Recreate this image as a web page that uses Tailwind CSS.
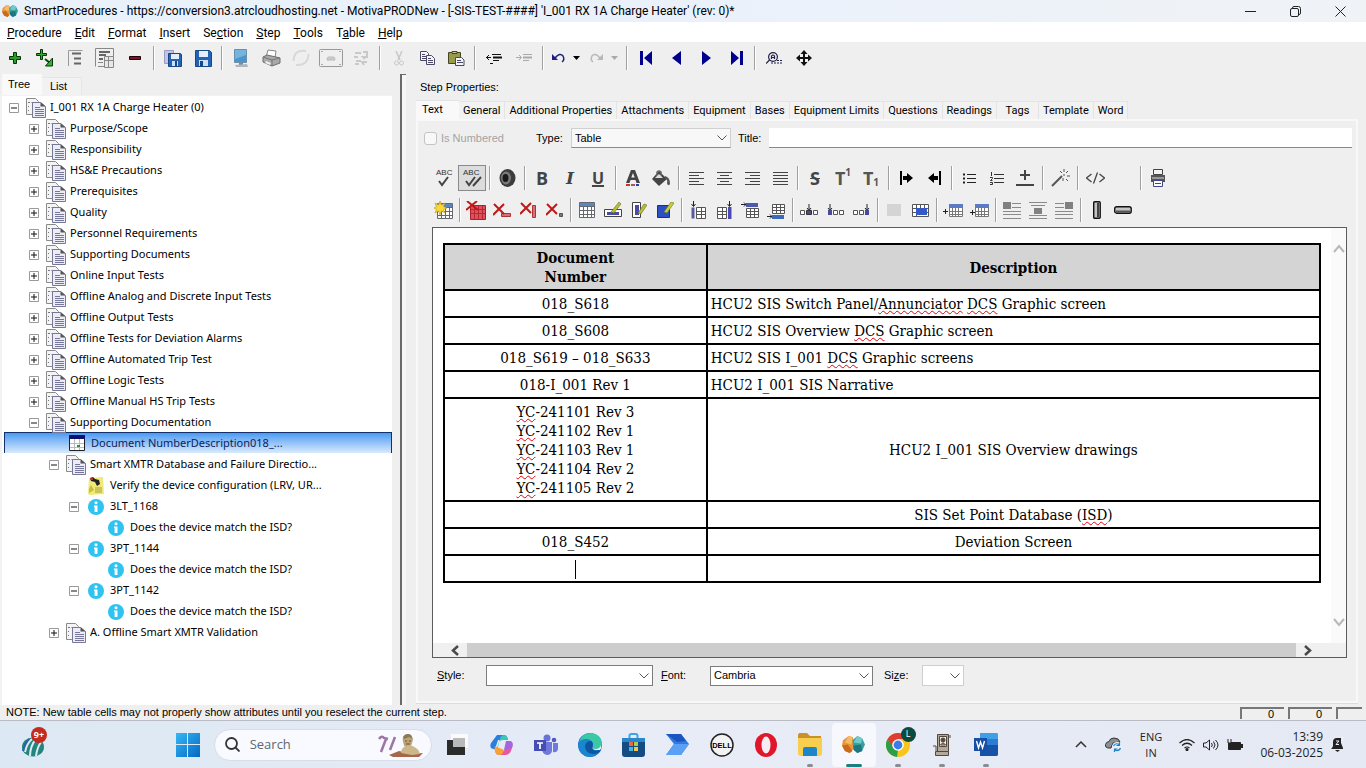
<!DOCTYPE html>
<html lang="en">
<head>
<meta charset="utf-8">
<title>SmartProcedures</title>
<script src="https://cdn.jsdelivr.net/npm/@tailwindcss/browser@4"></script>
</head>
<body class="flex h-screen flex-col overflow-hidden bg-[#efefef] font-['Liberation_Sans',sans-serif] text-[11px] text-black">

<svg class="hidden">
  <symbol id="plus" viewBox="0 0 10 10"><path d="M.5.5h9v9h-9z" fill="#fff" stroke="#9a9a9a"/><path d="M2 5h6M5 2v6" stroke="#111"/></symbol>
  <symbol id="minus" viewBox="0 0 10 10"><path d="M.5.5h9v9h-9z" fill="#fff" stroke="#9a9a9a"/><path d="M2 5h6" stroke="#111"/></symbol>
  <symbol id="docs" viewBox="0 0 20 20"><path d="M.5.5h9l3 3v13H.5z" fill="#f4f4f4" stroke="#8a8a8a"/><path d="M2 4.500h2M5.500 4.500h2M2 8.500h1M2 12.500h1" stroke="#777"/><path d="M6.500 4.500h8l5 4v11h-13z" fill="#ececf6" stroke="#777797"/><path d="M14.500 4v4.500h5z" fill="#555"/><path d="M9 9.500h5M9 11.500h9M9 13.500h9M9 15.500h9M9 17.500h9" stroke="#77779a"/></symbol>
  <symbol id="info" viewBox="0 0 16 16"><circle cx="8" cy="8" r="8" fill="#2fc3f2"/><circle cx="8" cy="3.800" r="1.500" fill="#fff"/><path d="M6 6.500h3.500V13H6.600V8H6z" fill="#fff"/></symbol>
  <symbol id="knot" viewBox="0 0 24 16"><path d="M7 0 11 1 13 5 12 12 8 16 3 14 0 9 1 4z" fill="#e8963a"/><path d="M7 0 11 1 10 8 3 6z" fill="#f7bb66"/><path d="M0 9 6 8 11 14 8 16 3 14z" fill="#c96a1c"/><path d="M16 0 21 2 24 8 21 14 16 16 12 13 11 4z" fill="#3a9fa0"/><path d="M16 0 21 2 20 7 12 6z" fill="#72cbc7"/><path d="M12 9 20 8 21 14 16 16 12 13z" fill="#1d777f"/></symbol>
  <symbol id="grid" viewBox="0 0 16 16"><path d="M.5.5h15v15H.5z" fill="#fff" stroke="#66686f"/><path d="M1 1h14v3H1z" fill="#5b86c4"/><path d="M1 4.500h14M1 8.500h14M1 12.500h14M4.500 4v11M8.500 4v11M12.500 4v11" stroke="#66686f"/></symbol>
  <symbol id="chev" viewBox="0 0 10 6"><path d="m.5.5 4.500 4.500L9.500.5" fill="none" stroke="#555"/></symbol>
</svg>

<header class="flex h-[22px] shrink-0 items-center bg-gradient-to-r from-[#e9f1fb] via-[#eaf1fb] to-[#f0f3f6] pr-[3px] font-['Roboto',sans-serif] text-[12px]">
  <svg class="ml-0.5 h-3 w-4" viewBox="0 0 24 16" preserveAspectRatio="none"><use href="#knot"/></svg>
  <h1 class="ml-1.5 flex-1 whitespace-nowrap">SmartProcedures - https://conversion3.atrcloudhosting.net - MotivaPRODNew - [-SIS-TEST-####] 'I_001 RX 1A Charge Heater' (rev: 0)*</h1>
  <div class="flex [&>button]:flex [&>button]:h-5 [&>button]:w-[45px] [&>button]:items-center [&>button]:justify-center">
    <button aria-label="Minimize"><svg width="11" height="11"><path d="M0 5.500h11" stroke="#222"/></svg></button>
    <button aria-label="Restore"><svg width="11" height="11" fill="none" stroke="#222"><rect x=".5" y="2.500" width="8" height="8" rx="1.500"/><path d="M2.500 2.500V2Q2.500.5 4 .5h4.500Q10.500.5 10.500 2.500V7Q10.500 8.500 9 8.500"/></svg></button>
    <button aria-label="Close"><svg width="11" height="11"><path d="m.5.5 10 10m0-10-10 10" stroke="#222"/></svg></button>
  </div>
</header>

<nav class="flex h-5 shrink-0 items-center gap-[13px] bg-white pl-[7px] pt-px font-['Roboto',sans-serif] text-[12px]">
  <button><u>P</u>rocedure</button><button><u>E</u>dit</button><button><u>F</u>ormat</button><button><u>I</u>nsert</button><button>Se<u>c</u>tion</button><button><u>S</u>tep</button><button><u>T</u>ools</button><button>T<u>a</u>ble</button><button><u>H</u>elp</button>
</nav>

<div role="toolbar" aria-label="Procedure" class="flex h-8 shrink-0 items-center [&>button]:flex [&>button]:h-7 [&>button]:w-[30px] [&>button]:items-center [&>button]:justify-center [&>hr]:mx-[3px] [&>hr]:h-6 [&>hr]:w-0.5 [&>hr]:border-0 [&>hr]:border-l [&>hr]:border-[#a0a0a0] [&>hr]:bg-white">
  <button aria-label="Add"><svg width="12" height="12"><path d="M4.500.5h3v4h4v3h-4v4h-3v-4h-4v-3h4z" fill="#2c9a2c" stroke="#033803"/></svg></button>
  <button aria-label="Add child"><svg width="18" height="18"><path d="M4.500.5h2v4h4v2h-4v4h-2v-4h-4v-2h4z" fill="#35b035" stroke="#033803"/><path d="m9 10 5 4" stroke="#044b04" stroke-width="2"/><path d="M16.500 9v8h-7z" fill="#35b035" stroke="#033803"/></svg></button>
  <button aria-label="Step"><svg width="15" height="16" fill="none" stroke="#999"><path d="M.5 16V.5h14"/><path d="M4 3.500h9M6 8.500h7M6 13.500h7" stroke="#666" stroke-width="2"/></svg></button>
  <button aria-label="Template step"><svg width="20" height="20" fill="none" stroke="#888"><path d="M.5.5h18v14M.5.5v18M3 14.500h5M3 18.500h6"/><path d="M4 4h11M4 7h7M4 11h4" stroke="#666" stroke-width="2"/><path d="M9.500 8.500h9v11h-9zM13.500 9v10M9 12.500h9" fill="#e8e8e8"/></svg></button>
  <button aria-label="Remove"><svg width="12" height="4"><path d="M.5.5h11v3H.5z" fill="#7b1230" stroke="#22000a"/></svg></button>
  <hr>
  <button aria-label="Save all"><svg width="18" height="17"><path d="M.5.5h9v13h-9z" fill="#c4c4e8" stroke="#9a9ac4"/><path d="M4.500 3.500h12l1 1v12h-13z" fill="#2463b4" stroke="#174785"/><path d="M7 4h8v5H7z" fill="#e4eefb"/><path d="M8 11h6v5H8z" fill="#cfe0f5"/><path d="M11 11h2v5h-2z" fill="#174785"/></svg></button>
  <button aria-label="Save"><svg width="17" height="17"><path d="M.5.5h14l2 2v14H.5z" fill="#2463b4" stroke="#174785"/><path d="M4 1h9v6H4z" fill="#e4eefb"/><path d="M4 10h9v6H4z" fill="#cfe0f5"/><path d="M5 11h3v5H5z" fill="#174785"/></svg></button>
  <hr>
  <button aria-label="View on screen"><svg width="16" height="19"><path d="M1.500.5h12v13h-12z" fill="#4d94cc" stroke="#6a90ad"/><path d="M2 1h11v5L2 10z" fill="#75b4df"/><path d="M6 14h4v2H6z" fill="#888"/><path d="m2 16 12-1 1 3H3z" fill="#aab6c2"/></svg></button>
  <button aria-label="Print"><svg width="19" height="18"><path d="m6 1 8 1-1 7-9-1z" fill="#fff" stroke="#888"/><path d="m1 8 4-2 9 2 4 1v5l-8 3-9-4z" fill="#a9a9a9" stroke="#6e6e6e"/><path d="m1 8 9 3 8-2M10 11v6" stroke="#777" fill="none"/><path d="m4 12 5 2-1 2-5-2z" fill="#eee"/></svg></button>
  <button aria-label="Refresh" disabled><svg width="18" height="18" fill="none" stroke="#d8d8d8" stroke-width="2"><path d="M14 2Q2 0 1.500 12M4 16Q16 17 16.500 5"/></svg></button>
  <button aria-label="Camera"><svg width="24" height="18" fill="none" stroke="#999"><rect x=".5" y=".5" width="23" height="17" rx="1"/><path d="M8 10q0-2 2-2h4q2 0 2 2t-2 1h-4q-2 1-2-1z" fill="#ccc" stroke="#bbb"/><path d="M2 2.500h2M2 15.500h2M20 2.500h2M20 15.500h2" stroke="#aaa"/></svg></button>
  <button aria-label="Swap" disabled><svg width="16" height="16" fill="none" stroke="#c9c9c9" stroke-width="2"><path d="M2 3h6M1 7h4M10 2h5M14 2v5h-4l2 2M3 11h5M14 12H9l2 3M2 14h4"/></svg></button>
  <hr>
  <button class="!w-[29px]" aria-label="Cut" disabled><svg width="10" height="15" fill="none" stroke="#c8c8c8"><path d="m2 0 4 9M8 0 4 9" stroke-width="1.500"/><circle cx="2.500" cy="12" r="2"/><circle cx="7.500" cy="12" r="2"/></svg></button>
  <button class="!w-[29px]" aria-label="Copy"><svg width="15" height="14" fill="#f4f4fb" stroke="#4a4a66"><path d="M.5.5h6l2 2v7h-8z"/><path d="M2 3.500h3M2 5.500h5M2 7.500h5"/><path d="M6.500 4.500h5l3 3v6h-8z"/><path d="M8 7.500h3M8 9.500h5M8 11.500h5"/></svg></button>
  <button class="!w-[29px]" aria-label="Paste"><svg width="17" height="15"><path d="M.5 1.500h12v11H.5z" fill="#989a4c" stroke="#44461e"/><path d="M4 .5h5v2H4z" fill="#c9c9a2" stroke="#44461e"/><path d="M7.500 6.500h6l2.500 2.500v5.500H7.500z" fill="#f4f4ff" stroke="#4a4a66"/><path d="M9 9.500h4M9 11.500h6" stroke="#4a4a66"/></svg></button>
  <hr>
  <button aria-label="Outdent"><svg width="16" height="11"><path d="M0 4.500h5M3 2 .5 4.500 3 7" fill="none" stroke="#111"/><path d="M6 1.500h9M7 7.500h6M4 10.500h3" stroke="#111"/><path d="M7 4.500h9" stroke="#111" stroke-width="2"/></svg></button>
  <button aria-label="Indent" disabled><svg width="16" height="11"><path d="M0 4.500h5M3 2l2.500 2.500L3 7" fill="none" stroke="#aaa"/><path d="M7 1.500h9M7 7.500h6" stroke="#aaa"/><path d="M7 4.500h9" stroke="#aaa" stroke-width="2"/></svg></button>
  <hr>
  <button class="!w-[38px] gap-2" aria-label="Undo"><svg width="13" height="10"><path d="M3 5Q8-1 11 3q2 4-1 6" fill="none" stroke="#20207c" stroke-width="1.500"/><path d="M0 1v6h6z" fill="#20207c"/></svg><svg width="7" height="4"><path d="M0 0h7L3.500 4z"/></svg></button>
  <button class="!w-[38px] gap-2" aria-label="Redo" disabled><svg width="13" height="10"><path d="M10 5Q5-1 2 3 0 7 3 9" fill="none" stroke="#b8b8b8" stroke-width="1.500"/><path d="M13 1v6H7z" fill="#b8b8b8"/></svg><svg width="7" height="4"><path d="M0 0h7L3.500 4z" fill="#aaa"/></svg></button>
  <hr>
  <button aria-label="First"><svg width="13" height="14" fill="#00008c"><path d="M0 0h3v14H0zM12 0v14L4 7z"/></svg></button>
  <button aria-label="Previous"><svg width="9" height="14" fill="#00008c"><path d="M9 0v14L0 7z"/></svg></button>
  <button aria-label="Next"><svg width="9" height="14" fill="#00008c"><path d="M0 0v14l9-7z"/></svg></button>
  <button aria-label="Last"><svg width="13" height="14" fill="#00008c"><path d="M10 0h3v14h-3zM1 0v14l8-7z"/></svg></button>
  <hr>
  <button aria-label="Find text"><svg width="17" height="12" fill="none" stroke="#20204a" stroke-width="1.200"><circle cx="7" cy="5" r="4.400"/><path d="M5.500 7V4q1.500-2 3 0v3M5.500 5.500h3M3.500 8 0 11.500"/><path d="M11 8.500h6M5 11h12" stroke-dasharray="2 1"/></svg></button>
  <button aria-label="Move"><svg width="16" height="16"><path d="M8 2v12M2 8h12" stroke="#111" stroke-width="2"/><path d="m8 0 3.500 4h-7zM8 16l3.500-4h-7zM0 8l4-3.500v7zM16 8l-4-3.500v7z" fill="#111"/></svg></button>
</div>

<main class="flex min-h-0 flex-1">
  <aside class="flex w-[400px] shrink-0 flex-col">
    <div role="tablist" class="flex h-[21px] shrink-0 items-end pl-0.5">
      <button role="tab" aria-selected="true" class="h-[21px] w-10 bg-[#f9f9f9] pl-1.5 text-left">Tree</button>
      <button role="tab" aria-selected="false" class="h-[18px] w-10 border-r border-t border-[#e6e6e6] bg-[#f2f2f2] pl-2 text-left">List</button>
    </div>
    <ul role="tree" class="mr-2 flex-1 overflow-hidden border-l-2 border-t border-[#f2f2f2] bg-white font-['Noto_Sans',sans-serif] text-[11px] [&>li]:flex [&>li]:h-[21px] [&>li]:items-center [&>li]:whitespace-nowrap [&>li]:pt-0.5 [&>li>svg]:shrink-0">
      <li class="pl-[7px]"><svg width="10" height="10"><use href="#minus"/></svg><svg class="ml-[7px] mr-1" width="20" height="20"><use href="#docs"/></svg>I_001 RX 1A Charge Heater (0)</li>
      <li class="pl-[27px]"><svg width="10" height="10"><use href="#plus"/></svg><svg class="ml-[7px] mr-1" width="20" height="20"><use href="#docs"/></svg>Purpose/Scope</li>
      <li class="pl-[27px]"><svg width="10" height="10"><use href="#plus"/></svg><svg class="ml-[7px] mr-1" width="20" height="20"><use href="#docs"/></svg>Responsibility</li>
      <li class="pl-[27px]"><svg width="10" height="10"><use href="#plus"/></svg><svg class="ml-[7px] mr-1" width="20" height="20"><use href="#docs"/></svg>HS&amp;E Precautions</li>
      <li class="pl-[27px]"><svg width="10" height="10"><use href="#plus"/></svg><svg class="ml-[7px] mr-1" width="20" height="20"><use href="#docs"/></svg>Prerequisites</li>
      <li class="pl-[27px]"><svg width="10" height="10"><use href="#plus"/></svg><svg class="ml-[7px] mr-1" width="20" height="20"><use href="#docs"/></svg>Quality</li>
      <li class="pl-[27px]"><svg width="10" height="10"><use href="#plus"/></svg><svg class="ml-[7px] mr-1" width="20" height="20"><use href="#docs"/></svg>Personnel Requirements</li>
      <li class="pl-[27px]"><svg width="10" height="10"><use href="#plus"/></svg><svg class="ml-[7px] mr-1" width="20" height="20"><use href="#docs"/></svg>Supporting Documents</li>
      <li class="pl-[27px]"><svg width="10" height="10"><use href="#plus"/></svg><svg class="ml-[7px] mr-1" width="20" height="20"><use href="#docs"/></svg>Online Input Tests</li>
      <li class="pl-[27px]"><svg width="10" height="10"><use href="#plus"/></svg><svg class="ml-[7px] mr-1" width="20" height="20"><use href="#docs"/></svg>Offline Analog and Discrete Input Tests</li>
      <li class="pl-[27px]"><svg width="10" height="10"><use href="#plus"/></svg><svg class="ml-[7px] mr-1" width="20" height="20"><use href="#docs"/></svg>Offline Output Tests</li>
      <li class="pl-[27px]"><svg width="10" height="10"><use href="#plus"/></svg><svg class="ml-[7px] mr-1" width="20" height="20"><use href="#docs"/></svg>Offline Tests for Deviation Alarms</li>
      <li class="pl-[27px]"><svg width="10" height="10"><use href="#plus"/></svg><svg class="ml-[7px] mr-1" width="20" height="20"><use href="#docs"/></svg>Offline Automated Trip Test</li>
      <li class="pl-[27px]"><svg width="10" height="10"><use href="#plus"/></svg><svg class="ml-[7px] mr-1" width="20" height="20"><use href="#docs"/></svg>Offline Logic Tests</li>
      <li class="pl-[27px]"><svg width="10" height="10"><use href="#plus"/></svg><svg class="ml-[7px] mr-1" width="20" height="20"><use href="#docs"/></svg>Offline Manual HS Trip Tests</li>
      <li class="pl-[27px]"><svg width="10" height="10"><use href="#minus"/></svg><svg class="ml-[7px] mr-1" width="20" height="20"><use href="#docs"/></svg>Supporting Documentation</li>
      <li aria-selected="true" class="ml-0.5 border-x border-t border-[#12306b] bg-gradient-to-b from-[#4a9af0] to-[#d9eafc] !pt-0 pl-16 text-[#0a1f5c]"><svg class="mr-1.5" width="16" height="16"><path d="M.5.5h15v15H.5z" fill="#fff" stroke="#222"/><path d="M0 0h16v4H0z" fill="#101070"/><path d="M1 8.500h14M1 12.500h14M5.500 4v11M10.500 4v11" stroke="#bbb"/><path d="M8 10h3v2H8z" fill="#3a8a3a"/></svg>Document NumberDescription018_...</li>
      <li class="pl-[47px]"><svg width="10" height="10"><use href="#minus"/></svg><svg class="ml-[7px] mr-1" width="20" height="20"><use href="#docs"/></svg>Smart XMTR Database and Failure Directio...</li>
      <li class="pl-[86px]"><svg class="mr-1.5" width="16" height="18"><path d="m1 1 14-1 1 17-14 1-2-1z" fill="#efe97a"/><path d="m1 12 2-4 3 5-5 3z" fill="#c9bd3a"/><path d="M7 11h7M7 13h7M7 15h7" stroke="#aaa02e"/><path d="m2 1 3-1 2 2 4 1 1 4-3 2-2-4-4-1z" fill="#222"/><path d="M2 1h3v2H3z" fill="#a33"/></svg>Verify the device configuration (LRV, UR...</li>
      <li class="pl-[67px]"><svg width="10" height="10"><use href="#minus"/></svg><svg class="ml-[9px] mr-1.5" width="16" height="16"><use href="#info"/></svg>3LT_1168</li>
      <li class="pl-[106px]"><svg class="mr-1.5" width="16" height="16"><use href="#info"/></svg>Does the device match the ISD?</li>
      <li class="pl-[67px]"><svg width="10" height="10"><use href="#minus"/></svg><svg class="ml-[9px] mr-1.5" width="16" height="16"><use href="#info"/></svg>3PT_1144</li>
      <li class="pl-[106px]"><svg class="mr-1.5" width="16" height="16"><use href="#info"/></svg>Does the device match the ISD?</li>
      <li class="pl-[67px]"><svg width="10" height="10"><use href="#minus"/></svg><svg class="ml-[9px] mr-1.5" width="16" height="16"><use href="#info"/></svg>3PT_1142</li>
      <li class="pl-[106px]"><svg class="mr-1.5" width="16" height="16"><use href="#info"/></svg>Does the device match the ISD?</li>
      <li class="pl-[47px]"><svg width="10" height="10"><use href="#plus"/></svg><svg class="ml-[7px] mr-1" width="20" height="20"><use href="#docs"/></svg>A. Offline Smart XMTR Validation</li>
    </ul>
  </aside>
  <div class="w-1.5 shrink-0 border-l-2 border-t border-[#6a6a6a] bg-[#f6f6f6]"></div>

  <section class="flex min-w-0 flex-1 flex-col pl-2.5 pr-2">
    <h2 class="flex h-[26px] shrink-0 items-center pl-1">Step Properties:</h2>
    <div role="tablist" class="flex h-[19px] shrink-0 items-end font-['Roboto',sans-serif] [&>button]:h-[18px] [&>button]:whitespace-nowrap [&>button]:border-r [&>button]:border-t [&>button]:border-[#e4e4e4] [&>button]:bg-[#f2f2f2] [&>button]:px-1 [&>button]:pt-px">
      <button role="tab" aria-selected="true" class="!h-[19px] w-[43px] !border-r-0 !bg-[#f9f9f9] pb-1 !pl-1.5 text-left">Text</button>
      <button role="tab">General</button><button role="tab">Additional Properties</button><button role="tab">Attachments</button><button role="tab">Equipment</button><button role="tab">Bases</button><button role="tab">Equipment Limits</button><button role="tab">Questions</button><button role="tab">Readings</button><button role="tab" class="w-[42px]">Tags</button><button role="tab">Template</button><button role="tab">Word</button>
    </div>

    <div role="tabpanel" class="mb-0.5 flex min-h-0 flex-1 flex-col border-2 border-[#f8f8f8] pl-3 shadow-[0_1px_0_#dcdcdc]">
      <div class="flex h-[34px] shrink-0 items-center pr-1">
        <label class="-ml-1.5 flex w-28 items-center text-[#a3a3a3]"><input type="checkbox" disabled class="mr-1 size-[13px] appearance-none rounded-[3px] border border-[#c4c4c4] bg-[#f8f8f8]">Is Numbered</label>
        <label for="type" class="w-[35px]">Type:</label>
        <span class="relative w-[160px]"><select id="type" class="h-5 w-full appearance-none border border-[#d0d0d0] border-b-[#8a8a8a] bg-[#f8f8f8] pl-[3px]"><option>Table</option></select><svg class="pointer-events-none absolute right-1 top-[7px] h-1.5 w-2.5"><use href="#chev"/></svg></span>
        <label for="title" class="ml-[7px] w-[31px]">Title:</label>
        <input id="title" class="h-5 min-w-0 flex-1 border-b border-[#8a8a8a] bg-white px-1">
      </div>

      <div role="toolbar" aria-label="Formatting" class="mt-[7px] flex h-8 shrink-0 items-center [&>button]:flex [&>button]:h-[26px] [&>button]:w-7 [&>button]:items-center [&>button]:justify-center [&>hr]:ml-[3px] [&>hr]:mr-0.5 [&>hr]:h-6 [&>hr]:w-0.5 [&>hr]:border-0 [&>hr]:border-l [&>hr]:border-[#a0a0a0] [&>hr]:bg-white">
        <button aria-label="Spell check"><svg width="18" height="19"><text x="1" y="6" font-size="8" fill="#333">ABC</text><path d="m4 12 3 4 6-8" fill="none" stroke="#444" stroke-width="2"/></svg></button>
        <button aria-label="Spell check as you type" aria-pressed="true" class="border border-[#8a8a8a] bg-[#dcdcdc]"><svg width="20" height="19"><text x="1" y="6" font-size="8" fill="#333">ABC</text><path d="m4 12 3 4 6-8M11 17l8-9" fill="none" stroke="#444" stroke-width="2"/></svg></button>
        <hr>
        <button aria-label="Sound"><svg width="17" height="18"><ellipse cx="8.500" cy="9" rx="8" ry="9" fill="#3c3c3c"/><ellipse cx="7" cy="9" rx="5" ry="6.500" fill="#7a7a7a"/><ellipse cx="6.500" cy="9" rx="3" ry="4" fill="#1a1a1a"/></svg></button>
        <hr>
        <button aria-label="Bold" class="font-['Open_Sans',sans-serif] text-[18px] font-bold leading-none text-[#444]">B</button>
        <button aria-label="Italic" class="font-['DejaVu_Serif',serif] text-[17px] font-bold italic leading-none text-[#444]">I</button>
        <button aria-label="Underline" class="font-['Open_Sans',sans-serif] text-[16px] font-bold leading-none text-[#444] underline decoration-2">U</button>
        <hr>
        <button aria-label="Font colour"><svg width="14" height="17"><path d="m5 0h4l5 13h-3.500L9.500 10h-5l-1 3H0zM7 3 5.300 7.500h3.400z" fill="#444"/><path d="M0 14h4v2H0z" fill="#c33"/><path d="M5 14h4v2H5z" fill="#a55"/><path d="M10 14h3v2h-3z" fill="#33b"/></svg></button>
        <button aria-label="Fill colour"><svg width="19" height="17"><path d="M7 1 15 9 7 16 0 9z" fill="#444"/><path d="M5 6V2q2-2 4 0v5" fill="none" stroke="#666" stroke-width="1.500"/><path d="M13 6q5 1 5 8-2 3-3-1 1-4-2-4z" fill="#555"/><path d="m3 8 4-4 4 4z" fill="#ddd"/></svg></button>
        <hr>
        <button aria-label="Align left"><svg width="15" height="14" stroke="#444"><path d="M0 1.500h15M0 4.500h10M0 7.500h15M0 10.500h10M0 13.500h15"/></svg></button>
        <button aria-label="Align centre"><svg width="15" height="14" stroke="#444"><path d="M0 1.500h15M3 4.500h9M0 7.500h15M3 10.500h9M0 13.500h15"/></svg></button>
        <button aria-label="Align right"><svg width="15" height="14" stroke="#444"><path d="M0 1.500h15M5 4.500h10M0 7.500h15M5 10.500h10M0 13.500h15"/></svg></button>
        <button aria-label="Justify"><svg width="15" height="14" stroke="#444"><path d="M0 1.500h15M0 4.500h15M0 7.500h15M0 10.500h15M0 13.500h15"/></svg></button>
        <hr>
        <button aria-label="Strikethrough" class="font-['Open_Sans',sans-serif] text-[18px] font-bold leading-none text-[#444] line-through decoration-1">S</button>
        <button aria-label="Superscript" class="font-['Open_Sans',sans-serif] text-[18px] font-bold leading-none text-[#555]">T<sup class="-top-1.5 text-[10px]">1</sup></button>
        <button aria-label="Subscript" class="font-['Open_Sans',sans-serif] text-[18px] font-bold leading-none text-[#555]">T<sub class="-bottom-1 text-[10px]">1</sub></button>
        <hr>
        <button aria-label="Indent"><svg width="13" height="14"><path d="M0 0h2v14H0zM7 2l6 5-6 5V9H3V5h4z"/></svg></button>
        <button aria-label="Outdent"><svg width="13" height="14"><path d="M11 0h2v14h-2zM6 2 0 7l6 5V9h4V5H6z"/></svg></button>
        <hr>
        <button aria-label="Bullets"><svg width="13" height="13" stroke="#222"><path d="M4 2.500h9M4 6.500h9M4 10.500h9"/><path d="M0 2.500h2M0 6.500h2M0 10.500h2" stroke-width="2"/></svg></button>
        <button aria-label="Numbering"><svg width="14" height="13" stroke="#333"><path d="M4 2.500h10M4 6.500h10M4 10.500h10M1.500 0v4M0 5.500h2.500v1L.5 8.500h2M0 10.500h2.500v2H0" fill="none"/></svg></button>
        <button aria-label="Line spacing"><svg width="18" height="16" stroke="#444" stroke-width="2"><path d="M9 0v10M4 5h10M0 15h18"/></svg></button>
        <hr>
        <button aria-label="Wizard"><svg width="19" height="18" stroke="#555" fill="none"><path d="M1 17 11 7" stroke-width="2"/><path d="M13 0v3M17 2l-2 2M19 7h-3M17 12l-2-2M12 9v3M9 2l2 2M13 5v2"/></svg></button>
        <hr>
        <button aria-label="Source"><svg width="19" height="12" stroke="#444" fill="none"><path d="m5.500 2-5 4 5 4M13.500 2l5 4-5 4M11.500.5l-4 11" stroke-width="1.300"/></svg></button>
        <span class="w-7"></span>
        <hr>
        <button aria-label="Print"><svg width="16" height="18"><path d="M3.500.5h9v5h-9z" fill="#f2f2f2" stroke="#444"/><path d="M1 6h14v7H1z" fill="#555"/><path d="M2 8h12v2H2z" fill="#999"/><path d="M3.500 11.500h9v6h-9z" fill="#fff" stroke="#44448a"/><path d="M5 14.500h6" stroke="#44448a"/></svg></button>
      </div>

      <div role="toolbar" aria-label="Table" class="flex h-8 shrink-0 items-center [&>button]:flex [&>button]:h-[26px] [&>button]:w-[26px] [&>button]:items-center [&>button]:justify-center [&>hr]:ml-[3px] [&>hr]:mr-0.5 [&>hr]:h-6 [&>hr]:w-0.5 [&>hr]:border-0 [&>hr]:border-l [&>hr]:border-[#a0a0a0] [&>hr]:bg-white">
        <button aria-label="Insert table"><svg width="19" height="18"><svg x="3" y="2" width="16" height="16"><use href="#grid"/></svg><path d="m6 0 1.500 4L11 2 9.500 5.500 13 7 9.500 8.500 11 12 7.500 10 6 14 4.500 10 1 12 2.500 8.500 0 7l2.500-1.500L1 2l3.500 2z" fill="#f7d838" stroke="#c09010" stroke-width=".6"/></svg></button>
        <hr>
        <button aria-label="Delete table"><svg width="20" height="19"><path d="M4.500 4.500h15v14h-15z" fill="#e0505a" stroke="#a8202c"/><path d="M5 8.500h14M5 12.500h14M8.500 5v13M12.500 5v13M16.500 5v13" stroke="#b52935"/><path d="m1 0 11 9M11 0 0 9" stroke="#c01818" stroke-width="2"/></svg></button>
        <button aria-label="Delete row"><svg width="18" height="15"><path d="M8.500 10.500h9v3h-9z" fill="#d6707a" stroke="#a33"/><path d="m1 1 10 10M11 1 0 12" stroke="#c01818" stroke-width="2"/></svg></button>
        <button aria-label="Delete column"><svg width="17" height="16"><path d="M12.500 3.500h3v12h-3z" fill="#d6707a" stroke="#a33"/><path d="m1 1 10 10M11 1 0 12" stroke="#c01818" stroke-width="2"/></svg></button>
        <button aria-label="Delete cell"><svg width="17" height="15"><path d="M13.500 10.500h3v3h-3z" fill="#777" stroke="#555"/><path d="m1 1 10 10M11 1 0 12" stroke="#c01818" stroke-width="2"/></svg></button>
        <hr>
        <button aria-label="Table properties"><svg width="16" height="16"><use href="#grid"/></svg></button>
        <button aria-label="Row properties"><svg width="18" height="16"><path d="M.5 7.500h17v7H.5z" fill="#fff" stroke="#444"/><path d="M3 10h12v3H3z" fill="#4a4aa8"/><path d="m7 10 8-10 2 2-7 9z" fill="#b6bd3a" stroke="#6d7216" stroke-width=".6"/></svg></button>
        <button aria-label="Column properties"><svg width="15" height="16"><path d="M.5.5h8v15h-8z" fill="#fff" stroke="#444"/><path d="M3 3h4v10H3z" fill="#4a4aa8"/><path d="m6 11 6-9 3 1-6 9z" fill="#b6bd3a" stroke="#6d7216" stroke-width=".6"/></svg></button>
        <button aria-label="Cell properties"><svg width="17" height="16"><path d="M.5 3.500h12v12H.5z" fill="#2c4fc4" stroke="#333"/><path d="m7 10 7-10 3 1-7 10z" fill="#c9cf3a" stroke="#6d7216" stroke-width=".6"/></svg></button>
        <hr>
        <button aria-label="Insert column left"><svg width="15" height="19"><path d="M2.500 0v5M.5 3l2 2.500L4.500 3" stroke="#222" fill="none"/><path d="M.5 6.500h3v11h-3z" fill="#5a5aa0"/><path d="M5.500 6.500h9v11h-9zM5 10.500h9M5 13.500h9M10.500 6v11" fill="#fff" stroke="#555"/></svg></button>
        <button aria-label="Insert column right"><svg width="15" height="19"><path d="M12.500 0v5M10.500 3l2 2.500 2-2.500" stroke="#222" fill="none"/><path d="M11 6h3.500v12H11z" fill="#4a4ab0"/><path d="M.5 6.500h9v11h-9zM0 10.500h9M0 13.500h9M5.500 6v11" fill="#fff" stroke="#555"/></svg></button>
        <button aria-label="Insert row above"><svg width="18" height="17"><path d="M0 2.500h5M3 .5l2 2-2 2" stroke="#222" fill="none"/><path d="M5 1h12v4H5z" fill="#4a5ab0"/><path d="M5.500 6.500h12v9h-12zM5 9.500h12M5 12.500h12M9.500 6v9M13.500 6v9" fill="#fff" stroke="#555"/></svg></button>
        <button aria-label="Insert row below"><svg width="18" height="17"><path d="M0 14.500h5M3 12.500l2 2-2 2" stroke="#222" fill="none"/><path d="M5 13h12v4H5z" fill="#3a6ab8"/><path d="M5.500 2.500h12v9h-12zM5 5.500h12M5 8.500h12M9.500 2v9M13.500 2v9" fill="#fff" stroke="#555"/></svg></button>
        <hr>
        <button aria-label="Insert cell"><svg width="18" height="12"><path d="M9 0v6M7 4l2 2.500L11 4" stroke="#222" fill="none"/><path d="M.5 6.500h4v4h-4zM13.500 6.500h4v4h-4z" fill="#fff" stroke="#555"/><path d="M6.500 6.500h5v4h-5z" fill="#4a4a9a" stroke="#333"/></svg></button>
        <button aria-label="Insert cell left"><svg width="17" height="12"><path d="M3 0v6M1 4l2 2.500L5 4" stroke="#222" fill="none"/><path d="M6.500 6.500h4v4h-4zM12.500 6.500h4v4h-4z" fill="#fff" stroke="#555"/><path d="M1 6h4v5H1z" fill="#4a4a9a"/></svg></button>
        <button aria-label="Insert cell right"><svg width="17" height="12"><path d="M14 0v6M12 4l2 2.500L16 4" stroke="#222" fill="none"/><path d="M.5 6.500h4v4h-4zM6.500 6.500h4v4h-4z" fill="#fff" stroke="#555"/><path d="M12 6h4v5h-4z" fill="#4a4a9a"/></svg></button>
        <hr>
        <button aria-label="Merge cells" disabled><svg width="14" height="12"><path d="M0 0h14v12H0z" fill="#d4d4d4"/></svg></button>
        <button aria-label="Split cells"><svg width="17" height="13"><path d="M.5.5h16v12H.5zM4.500 0v12M0 4.500h16M0 8.500h16M8.500 0v4M12.500 0v4" fill="#fff" stroke="#555"/><path d="M4 4h11v7H4z" fill="#3558c8"/></svg></button>
        <hr>
        <button aria-label="Row height"><svg width="20" height="13"><path d="M0 7.500h5M2.500 5v5" stroke="#222"/><path d="M6.500.5h13v12h-13z" fill="#fff" stroke="#777"/><path d="M6 0h14v4H6z" fill="#5b7cc4"/><path d="M6 7.500h13M6 10.500h13M9.500 4v8M12.500 4v8M15.500 4v8" stroke="#777"/></svg></button>
        <button aria-label="Column width"><svg width="19" height="13"><path d="M0 8.500h5M2.500 6v5" stroke="#222"/><path d="M5.500.5h13v12h-13z" fill="#fff" stroke="#777"/><path d="M5 0h14v4H5z" fill="#5b7cc4"/><path d="M5 7.500h13M5 10.500h13M8.500 4v8M11.500 4v8M14.500 4v8" stroke="#777"/></svg></button>
        <hr>
        <button aria-label="Float left"><svg width="18" height="17"><path d="M0 0h8v7H0z" fill="#808080"/><path d="M9 1.500h9M9 5.500h9M0 9.500h18M0 12.500h18M0 16.500h18" stroke="#8a8a8a"/></svg></button>
        <button aria-label="Float centre"><svg width="18" height="17"><path d="M5 6h8v6H5z" fill="#808080"/><path d="M0 .5h18M2 3.500h14M0 13.500h18M0 16.500h18" stroke="#8a8a8a"/></svg></button>
        <button aria-label="Float right"><svg width="18" height="17"><path d="M10 0h8v7h-8z" fill="#808080"/><path d="M0 1.500h9M0 5.500h9M0 9.500h18M0 12.500h18M0 16.500h18" stroke="#8a8a8a"/></svg></button>
        <hr>
        <button aria-label="Vertical bar"><svg width="8" height="18"><rect x=".7" y=".7" width="6.500" height="16.500" rx="1" fill="#c4c4c4" stroke="#111" stroke-width="1.400"/><path d="M5 2v14" stroke="#444" stroke-width="2"/></svg></button>
        <button aria-label="Horizontal bar"><svg width="18" height="8"><rect x=".7" y=".7" width="16.500" height="6.500" rx="2" fill="#c4c4c4" stroke="#111" stroke-width="1.400"/><path d="M2 5.500h14" stroke="#555" stroke-width="2"/></svg></button>
      </div>

      <div class="ml-0.5 mr-[9px] mt-px flex min-h-0 flex-1 flex-col border border-[#5c5c5c] bg-white">
        <div class="flex min-h-0 flex-1">
          <div contenteditable="true" spellcheck="false" class="min-w-0 flex-1 overflow-hidden px-2.5 pt-[15px] outline-none">
            <table class="w-full table-fixed border-collapse text-center font-['DejaVu_Serif_Condensed','Cambria',serif] text-[15px] leading-[19px] [&_td]:border-2 [&_td]:border-black [&_td]:px-[3px] [&_td]:pb-0.5 [&_td]:pt-1 [&_th]:border-2 [&_th]:border-black [&_th]:bg-[#d4d4d4] [&_th]:px-[3px] [&_th]:pb-0.5 [&_th]:pt-1 [&_u]:decoration-red-600 [&_u]:decoration-wavy [&_u]:decoration-1">
              <colgroup><col class="w-[30%]"><col></colgroup>
              <tr><th>Document<br>Number</th><th>Description</th></tr>
              <tr><td>018_S618</td><td class="text-left">HCU2 SIS Switch Panel/<u>Annunciator</u> <u>DCS</u> Graphic screen</td></tr>
              <tr><td>018_S608</td><td class="text-left">HCU2 SIS Overview <u>DCS</u> Graphic screen</td></tr>
              <tr><td>018_S619 – 018_S633</td><td class="text-left">HCU2 SIS I_001 <u>DCS</u> Graphic screens</td></tr>
              <tr><td>018-I_001 Rev 1</td><td class="text-left">HCU2 I_001 SIS Narrative</td></tr>
              <tr><td><u>YC</u>-241101 Rev 3<br><u>YC</u>-241102 Rev 1<br><u>YC</u>-241103 Rev 1<br><u>YC</u>-241104 Rev 2<br><u>YC</u>-241105 Rev 2</td><td>HCU2 I_001 SIS Overview drawings</td></tr>
              <tr><td></td><td>SIS Set Point Database (<u>ISD</u>)</td></tr>
              <tr><td>018_S452</td><td>Deviation Screen</td></tr>
              <tr><td><span class="mx-auto block h-[19px] w-px bg-black"></span></td><td></td></tr>
            </table>
          </div>
          <div class="flex w-[15px] shrink-0 flex-col items-center justify-between bg-[#fafafa] py-4" aria-hidden="true">
            <svg width="12" height="9" fill="none" stroke="#b8b8b8" stroke-width="2"><path d="m1 8 5-6 5 6"/></svg>
            <svg width="12" height="9" fill="none" stroke="#b8b8b8" stroke-width="2"><path d="m1 1 5 6 5-6"/></svg>
          </div>
        </div>
        <div class="flex h-3.5 shrink-0 items-center bg-[#f0f0f0]" aria-hidden="true">
          <span class="flex w-[34px] justify-end pr-2"><svg width="8" height="11" fill="none" stroke="#4a4a4a" stroke-width="2.500"><path d="M7 1 2 5.500 7 10"/></svg></span>
          <span class="h-full flex-1 bg-[#cdcdcd]"></span>
          <span class="flex w-[50px] pl-2"><svg width="8" height="11" fill="none" stroke="#4a4a4a" stroke-width="2.500"><path d="m1 1 5 4.500L1 10"/></svg></span>
        </div>
      </div>

      <div class="flex h-[43px] shrink-0 items-center pb-2 pl-[7px]">
        <label for="style" class="w-[49px]"><u>S</u>tyle:</label>
        <span class="relative w-[167px]"><select id="style" class="h-[21px] w-full appearance-none border border-[#7c7c7c] bg-white pl-[3px]"><option></option></select><svg class="pointer-events-none absolute right-1 top-2 h-1.5 w-2.5"><use href="#chev"/></svg></span>
        <label for="font" class="ml-2 w-[49px]"><u>F</u>ont:</label>
        <span class="relative w-[163px]"><select id="font" class="h-5 w-full appearance-none border border-[#7c7c7c] bg-white pl-[3px]"><option>Cambria</option></select><svg class="pointer-events-none absolute right-1 top-[7px] h-1.5 w-2.5"><use href="#chev"/></svg></span>
        <label for="size" class="ml-[11px] w-[38px]">Si<u>z</u>e:</label>
        <span class="relative w-[42px]"><select id="size" class="h-[21px] w-full appearance-none border border-[#cfcfcf] bg-white"><option></option></select><svg class="pointer-events-none absolute right-1 top-2 h-1.5 w-2.5"><use href="#chev"/></svg></span>
      </div>
    </div>
  </section>
</main>

<div role="status" class="flex h-[15px] shrink-0 items-center pl-1.5 pr-1">
  <span class="flex-1">NOTE: New table cells may not properly show attributes until you reselect the current step.</span>
  <div class="flex h-3 items-start gap-1 overflow-hidden [&>span]:h-3 [&>span]:border-l-2 [&>span]:border-t-2 [&>span]:border-[#777] [&>span]:leading-[10px]">
    <span class="w-11 pl-[26px]">0</span><span class="w-11 pl-[26px]">0</span><span class="w-[26px]"></span>
  </div>
</div>

<footer class="flex h-12 shrink-0 items-center border-t border-[#b9bcc4] bg-gradient-to-r from-[#dce8f3] via-[#e8ecf7] to-[#e5e9f4] pl-[15px] font-['Open_Sans','Noto_Sans',sans-serif] text-[11px] [&_button]:flex [&_button]:items-center [&_button]:justify-center">
  <button aria-label="Widgets" class="relative h-11 w-9"><svg width="24" height="26"><ellipse cx="12" cy="15" rx="11" ry="9.500" fill="#24857f"/><path d="M4 20Q6 11 11 7M9 24Q9 14 15 7M15 24Q16 16 20 10" stroke="#dcecf4" stroke-width="2" fill="none"/><path d="M2 19Q3 12 8 7" stroke="#2b62a8" stroke-width="2" fill="none"/></svg><span class="absolute right-1 top-1 flex size-4 items-center justify-center rounded-full bg-[#c42b1c] text-[9px] font-bold text-white">9+</span></button>
  <div class="min-w-0 grow-2"></div>
  <button aria-label="Start" class="h-11 w-11"><svg width="24" height="24"><defs><linearGradient id="win" x2="1" y2="1"><stop stop-color="#35b8f4"/><stop offset="1" stop-color="#0667c5"/></linearGradient></defs><path d="M0 0h11v11H0zM12 0h12v11H12zM0 12h11v12H0zM12 12h12v12H12z" fill="url(#win)"/></svg></button>
  <label class="mx-1 flex h-8 w-[218px] items-center rounded-full border border-[#d8dde8] bg-[#f8faff] pl-2.5">
    <svg width="15" height="15" fill="none" stroke="#333" stroke-width="1.800"><circle cx="6.500" cy="6.500" r="5.500"/><path d="m10.500 10.500 4 4"/></svg>
    <input placeholder="Search" aria-label="Search" class="ml-2.5 w-0 flex-1 bg-transparent text-[13px] placeholder:text-[#62656e]">
    <svg class="mr-1" width="50" height="26"><path d="M4 20 9 7M2 7q3-4 5-1l4 1M13 18l5-13" stroke="#9d76a4" stroke-width="2.500" fill="none"/><path d="m12 23 10-4 12 3 12-1-4 4H16z" fill="#a5664b"/><path d="M26 5q3-5 8-2l2 5-2 6-6 1q-3-5-2-10z" fill="#bda477"/><path d="M24 21q0-7 9-8 9 3 10 9l-8 1z" fill="#cdb78a"/><path d="M26 5q3-5 8-2l2 4-4-2-5 2z" fill="#8a7856"/><path d="M28 9h2M32 9h2M29 12h4" stroke="#6b5935"/></svg>
  </label>
  <div class="flex [&>button]:relative [&>button]:h-11 [&>button]:w-11">
    <button aria-label="Task view"><svg width="23" height="22"><path d="M5 0h17v14H5z" fill="#fafafa"/><path d="M7 4h12v9H7z" fill="#b9b9b9"/><path d="M1 6h6v7h12v8H1z" fill="#2b2b2b"/></svg></button>
    <button aria-label="Copilot"><svg width="23" height="22"><path d="M7 1h7q3 0 4 5H8L5 15H3q-4-1-2-6z" fill="#2b7de0"/><path d="M14 1q3 0 4 5h-5Q9 6 8 11l-2 5H3q5 0 6-7 1-8 5-8z" fill="#3cc4b4"/><path d="M16 21H9q-3 0-4-4h9l4-10h2q4 1 2 7-2 7-6 7z" fill="#e858a0"/><path d="M5 12q-1 3 0 5 1 4 4 4 4 0 5-5z" fill="#f6a13a"/><path d="M16 7h4q4 1 2 7l-8 2z" fill="#a267df"/></svg></button>
    <button aria-label="Teams"><svg width="24" height="22"><circle cx="13" cy="4" r="3.500" fill="#6b72d6"/><circle cx="20" cy="6" r="2.300" fill="#5059c9"/><path d="M9 8h9v9q-1 4-5 4-5-1-5-6zM19 9h5v6q-1 4-5 3z" fill="#7078dc"/><path d="M0 6h12v11H0z" fill="#454db4"/><path d="M3 9h6M6 9v6" stroke="#fff" stroke-width="1.700"/></svg></button>
    <button aria-label="Edge"><svg width="24" height="24"><circle cx="12" cy="12" r="12" fill="#1674c4"/><path d="M1 9Q4 0 13 0q10 1 11 10 0 6-7 6-4-1-2-4-1-6-8-5-4 0-6 2z" fill="#3bc8a6"/><path d="M0 12Q2 5 9 6q6 1 6 6-2 5 3 7 3 0 5-2-5 7-12 7Q1 22 0 12z" fill="#1b86d0"/><path d="M7 13q1-5 6-5 2 1 2 4-2 5 3 6l5-1q-2 4-8 4-8-1-8-8z" fill="#0f55a0"/><path d="M11 10q3-1 4 2-2 4 2 5h5q2-2 1-5-1 4-6 4-4-1-2-4-1-3-4-2z" fill="#eaf3fb"/></svg></button>
    <button aria-label="Store"><svg width="23" height="24"><path d="M7.500 6V2.500q0-1.500 2-1.500h4q2 0 2 1.500V6" fill="none" stroke="#3aa5e8" stroke-width="2"/><path d="M0 5h23v16q0 3-3 3H3q-3 0-3-3z" fill="#154a82"/><path d="M0 5h23v4H0z" fill="#2a86cf"/><path d="M7 9h4v4H7z" fill="#e8694a"/><path d="M12 9h4v4h-4z" fill="#a8d04a"/><path d="M7 14h4v4H7z" fill="#42b4ea"/><path d="M12 14h4v4h-4z" fill="#f4c842"/></svg></button>
    <button aria-label="Power Automate"><svg width="23" height="21"><path d="M0 0h15l8 10-8 11H0l8-11z" fill="#2f7ae5"/><path d="M0 0h15l5 7-9 1z" fill="#1b56c0"/><path d="M8 10h15l-8 11H0z" fill="#5aa0f4"/></svg></button>
    <button aria-label="Dell"><svg width="24" height="24"><circle cx="12" cy="12" r="11" fill="#f3f3f3" stroke="#222" stroke-width="1.500"/><text x="12" y="15" text-anchor="middle" font-size="7.500" font-weight="bold" font-family="Liberation Sans">DELL</text></svg></button>
    <button aria-label="Opera"><svg width="22" height="24"><ellipse cx="11" cy="12" rx="11" ry="12" fill="#e0162b"/><ellipse cx="11" cy="12" rx="4.500" ry="8.500" fill="#f4eef4"/></svg></button>
    <button aria-label="File Explorer"><svg width="24" height="23"><path d="M1 0h8l3 3h11v5H0V2z" fill="#c9912a"/><path d="M0 5h24v15q0 3-3 3H3q-3 0-3-3z" fill="#f8ce4e"/><path d="M5 16q0-2 2-2h10q2 0 2 2v7H5z" fill="#1c86c8"/></svg><i class="absolute bottom-0 h-[3px] w-1.5 rounded-full bg-[#8b8b92]"></i></button>
    <button aria-label="SmartProcedures" class="rounded bg-[#f6f8fd]"><svg width="23" height="17" viewBox="0 0 24 16" preserveAspectRatio="none"><use href="#knot"/></svg><i class="absolute bottom-0 h-[3px] w-4 rounded-full bg-[#1f7f80]"></i></button>
    <button aria-label="Chrome"><svg width="24" height="24"><circle cx="12" cy="12" r="12" fill="#f9c51c"/><path d="M1.600 6A12 12 0 0 1 22.400 6H12L7 15z" fill="#dd3c2e"/><path d="M1.600 6 7.500 15 12 17l-1 7A12 12 0 0 1 1.600 6z" fill="#2a9e4b"/><circle cx="12" cy="12" r="5.800" fill="#fff"/><circle cx="12" cy="12" r="4.400" fill="#3a7ce8"/></svg><span class="absolute right-1 top-1 flex size-[15px] items-center justify-center rounded-full bg-[#0c4a3c] text-[9px] text-white">L</span><i class="absolute bottom-0 h-[3px] w-1.5 rounded-full bg-[#8b8b92]"></i></button>
    <button aria-label="Device manager"><svg width="20" height="24" fill="#b4a89a" stroke="#51483f"><path d="M5.500 1.500h11v17h-11z"/><path d="M7.500 3.500h7v10h-7z" fill="#efe9df"/><circle cx="11" cy="7" r="2" fill="#51483f"/><path d="M8.500 12q2.500-4 5 0zM3.500 18.500h13v4h-13z"/><path d="M1 13h3v5M18 2v3" fill="none"/></svg><i class="absolute bottom-0 h-[3px] w-1.5 rounded-full bg-[#8b8b92]"></i></button>
    <button aria-label="Word"><svg width="24" height="23"><path d="M6 0h16q2 0 2 2v19q0 2-2 2H6z" fill="#2b7cd3"/><path d="M6 0h16q2 0 2 2v4H6z" fill="#3fa0e8"/><path d="M6 12h18v9q0 2-2 2H6z" fill="#1552a8"/><path d="M0 5h13v13H0z" fill="#174ea6"/><path d="m2.500 8 2 7 2-6 2 6 2-7" fill="none" stroke="#fff" stroke-width="1.400"/></svg><i class="absolute bottom-0 h-[3px] w-1.5 rounded-full bg-[#8b8b92]"></i></button>
  </div>
  <div class="min-w-0 grow"></div>
  <div class="flex shrink-0 items-center text-center leading-4 text-[#1f1f24]">
    <button aria-label="Show hidden icons" class="h-10 w-8"><svg width="12" height="7" fill="none" stroke="#333" stroke-width="1.500"><path d="m1 6 5-5 5 5"/></svg></button>
    <button aria-label="Cloud sync" class="h-10 w-8"><svg width="17" height="15"><path d="M4 11Q0 11 .5 7.500 1 5 4 4.500 5 1 9 1q5 0 6 4L8 6 6 11z" fill="#8a9096" stroke="#333"/><circle cx="12" cy="10" r="5" fill="#e8f0f8"/><path d="M8.500 9Q10 6 13 7l1.500 1M15.500 11q-1 3-4.500 2.500L9.500 12M14.500 5.500v3h-3M9.500 15v-3h3" fill="none" stroke="#1f7fc4" stroke-width="1.200"/></svg></button>
    <button class="w-11">ENG<br>IN</button>
    <button aria-label="Network, sound and battery" class="h-10 w-[76px] gap-2">
      <svg width="16" height="12" fill="none" stroke="#222" stroke-width="1.200"><path d="M.5 4Q8-3 15.500 4M3 6.500Q8 2 13 6.500M5.500 9Q8 7 10.500 9"/><circle cx="8" cy="10.500" r="1" fill="#222"/></svg>
      <svg width="16" height="12" fill="none" stroke="#222"><path d="M.5 4H3l3.500-3v10L3 8H.5zM8.500 4q1.500 2 0 4M10.500 2.500q3 3.500 0 7M12.500 1q5 5 0 10"/></svg>
      <svg width="16" height="12"><path d="M1.500 3.500h12v7h-12z" fill="#222" stroke="#222"/><path d="M14 5h2v4h-2z" fill="#222"/><path d="M1 0v4h3V0M2.500 4v3" stroke="#222" fill="#e6eaf5"/></svg>
    </button>
    <button class="w-[74px] !justify-end text-right text-[12px] leading-4">13:39<br>06-03-2025</button>
    <button aria-label="Notifications" class="h-10 w-[43px] !justify-start pl-2"><svg width="14" height="15"><path d="M1 11 2 9V5q0-4 4-4h4v5l2 5v1H0zM4 13h5l-2.500 2z" fill="#222"/><path d="M9.500.5h3.500L10 4h3.500M5 4h3L5 7.500h3" fill="none" stroke="#eef"/></svg></button>
  </div>
</footer>
</body>
</html>
